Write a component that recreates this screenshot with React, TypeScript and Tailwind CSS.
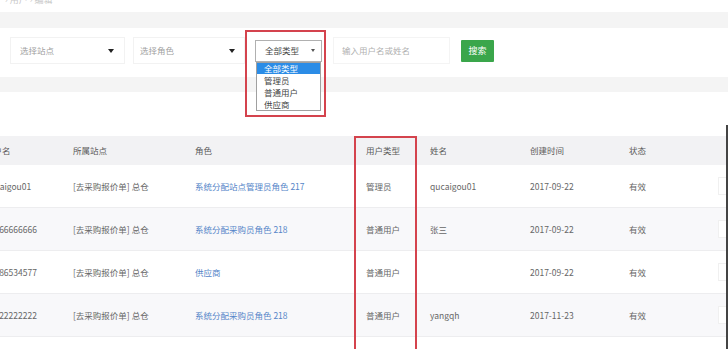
import React from "react";

const cols = "grid grid-cols-[88px_122px_171px_64px_100px_99px_89px_60px] items-center";

const rows = [
  { u: "qucaigou01", site: "[去采购报价单] 总仓", role: "系统分配站点管理员角色 217", type: "管理员", name: "qucaigou01", date: "2017-09-22", st: "有效" },
  { u: "13666666666", site: "[去采购报价单] 总仓", role: "系统分配采购员角色 218", type: "普通用户", name: "张三", date: "2017-09-22", st: "有效" },
  { u: "13786534577", site: "[去采购报价单] 总仓", role: "供应商", type: "普通用户", name: "", date: "2017-09-22", st: "有效" },
  { u: "13222222222", site: "[去采购报价单] 总仓", role: "系统分配采购员角色 218", type: "普通用户", name: "yangqh", date: "2017-11-23", st: "有效" },
];

function Arrow({ small }: { small?: boolean }) {
  return small ? (
    <span className="block w-0 h-0 border-l-[2.5px] border-r-[2.5px] border-t-[3px] border-l-transparent border-r-transparent border-t-[#555]" />
  ) : (
    <span className="block w-0 h-0 border-l-[3.5px] border-r-[3.5px] border-t-[4px] border-l-transparent border-r-transparent border-t-[#222]" />
  );
}

export default function App() {
  return (
    <div
      className="w-[728px] h-[349px] overflow-hidden bg-white text-[8.5px] text-[#666]"
      style={{ fontFamily: '"Noto Sans CJK SC", "Noto Sans", sans-serif' }}
    >
      {/* breadcrumb */}
      <div className="h-[12px] overflow-hidden pl-[5px]">
        <div className="-mt-[6px] text-[9px] text-[#c8c8c8] leading-[12px]">› 用户 › 编辑</div>
      </div>
      <div className="h-[16px] bg-[#f4f4f4]" />

      {/* filter panel */}
      <div className="h-[49px] pt-[9px]">
        <div className="flex items-center h-[27px]">
          <div className="ml-[10px] w-[115px] h-[27px] border border-[#f2f2f2] flex items-center justify-between pl-[9px] pr-[10px] text-[#a0a0a0]">
            <span>选择站点</span>
            <Arrow />
          </div>
          <div className="ml-[8px] w-[112px] h-[27px] border border-[#f2f2f2] flex items-center justify-between pl-[6px] pr-[9px] text-[#a0a0a0]">
            <span>选择角色</span>
            <Arrow />
          </div>
          <div className="relative ml-[10px] w-[67px] h-[22px]">
            <div className="w-full h-full border border-[#b0b0b0] flex items-center justify-between pl-[9px] pr-[6px] text-[#444]">
              <span>全部类型</span>
              <Arrow small />
            </div>
            <div className="absolute left-[1px] top-[22px] w-[65px] border border-[#a0a0a0] bg-white text-[#444] leading-[12px]">
              <div className="h-[11px] bg-[#2b8ce6] text-white pl-[7px] leading-[11px]">全部类型</div>
              <div className="h-[12px] pl-[7px]">管理员</div>
              <div className="h-[12px] pl-[7px]">普通用户</div>
              <div className="h-[12px] pl-[7px]">供应商</div>
            </div>
            <div className="absolute -left-[10px] -top-[10px] w-[81px] h-[87px] border-2 border-[#d4434d]" />
          </div>
          <div className="ml-[11px] w-[117px] h-[27px] border border-[#f4f4f4] flex items-center pl-[8px] text-[#b0b0b0]">
            输入用户名或姓名
          </div>
          <div className="ml-[11px] w-[33px] h-[22px] bg-[#3aa64b] rounded-[1px] flex items-center justify-center text-white text-[9px]">
            搜索
          </div>
        </div>
      </div>

      <div className="h-[15px] bg-[#f4f4f4]" />
      <div className="h-[33px]" />

      {/* table area */}
      <div className="flex h-[224px]">
        <div className="relative flex-1 overflow-hidden">
          <div className="h-[11px]" />
          <div className="-ml-[15px] w-[800px]">
            <div className={`${cols} h-[29px] bg-[#f2f2f4] text-[#5a5a5a]`}>
              <div>用户名</div>
              <div>所属站点</div>
              <div>角色</div>
              <div>用户类型</div>
              <div>姓名</div>
              <div>创建时间</div>
              <div>状态</div>
              <div />
            </div>
            {rows.map((r, i) => (
              <div
                key={i}
                className={`${cols} h-[43px] border-b border-[#ededef] ${i % 2 === 1 ? "bg-[#f8f8fa]" : "bg-white"}`}
              >
                <div>{r.u}</div>
                <div>{r.site}</div>
                <div className="text-[#5585c8]">{r.role}</div>
                <div>{r.type}</div>
                <div>{r.name}</div>
                <div>{r.date}</div>
                <div>{r.st}</div>
                <div>
                  <div className="w-[30px] h-[18px] border border-[#f0f0f0] bg-white" />
                </div>
              </div>
            ))}
            <div className={`${cols} h-[43px] bg-white`} />
          </div>
          <div className="absolute left-[354px] top-[11px] w-[63px] h-[240px] border-2 border-[#d4434d]" />
        </div>
        <div className="w-[2px] bg-[#444]" />
      </div>
    </div>
  );
}
